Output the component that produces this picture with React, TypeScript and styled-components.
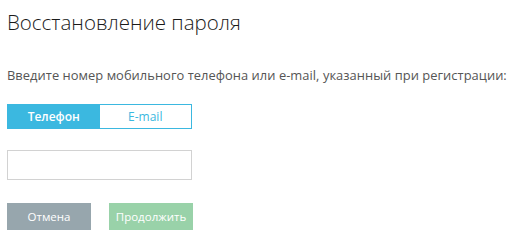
import { useState } from "react";
import styled, { createGlobalStyle } from "styled-components";

const GlobalStyle = createGlobalStyle`
  body {
    margin: 0;
    background: #fff;
    font-family: "Open Sans", "Noto Sans", sans-serif;
  }
`;

type Mode = "phone" | "email";

export default function App() {
  const [mode, setMode] = useState<Mode>("phone");
  const [value, setValue] = useState("");

  return (
    <Container>
      <GlobalStyle />
      <Title>Восстановление пароля</Title>
      <Hint>
        Введите номер мобильного телефона или e-mail, указанный при регистрации:
      </Hint>
      <Tabs>
        <Tab $active={mode === "phone"} onClick={() => setMode("phone")}>
          Телефон
        </Tab>
        <Tab $active={mode === "email"} onClick={() => setMode("email")}>
          E-mail
        </Tab>
      </Tabs>
      <Field value={value} onChange={(e) => setValue(e.target.value)} />
      <Actions>
        <Button $color="#97a6ad">Отмена</Button>
        <Button $color="#99d2a9" disabled={!value}>
          Продолжить
        </Button>
      </Actions>
    </Container>
  );
}

const Container = styled.div`
  padding: 8px 7px;
  display: flex;
  flex-direction: column;
  align-items: flex-start;
`;

const Title = styled.h1`
  margin: 0;
  font-size: 20.5px;
  font-weight: 300;
  line-height: 28px;
  color: #1a1a1a;
`;

const Hint = styled.p`
  margin: 30px 0 0;
  font-size: 12.9px;
  letter-spacing: 0.04px;
  line-height: 18px;
  color: #555;
  white-space: nowrap;
`;

const Tabs = styled.div`
  margin-top: 20px;
  width: 185px;
  height: 25px;
  box-sizing: border-box;
  border: 1px solid #3bb8e0;
  display: flex;
`;

const Tab = styled.button<{ $active: boolean }>`
  flex: 1;
  border: none;
  padding: 0;
  font-family: inherit;
  font-size: 12px;
  font-weight: ${(p) => (p.$active ? 600 : 400)};
  color: ${(p) => (p.$active ? "#fff" : "#3bb8e0")};
  background: ${(p) => (p.$active ? "#3bb8e0" : "#fff")};
  cursor: pointer;
`;

const Field = styled.input`
  margin-top: 21px;
  width: 185px;
  height: 30px;
  box-sizing: border-box;
  border: 1px solid #d2d2d2;
  outline: none;
  padding: 0 8px;
  font-family: inherit;
  font-size: 13px;
`;

const Actions = styled.div`
  margin-top: 23px;
  display: flex;
  gap: 18px;
`;

const Button = styled.button<{ $color: string }>`
  height: 27px;
  padding: 0 5px;
  min-width: 84px;
  border: none;
  font-family: inherit;
  font-size: 11.5px;
  font-weight: 400;
  color: #fff;
  background: ${(p) => p.$color};
  cursor: pointer;

  &:disabled {
    cursor: default;
    color: #fff;
  }
`;
